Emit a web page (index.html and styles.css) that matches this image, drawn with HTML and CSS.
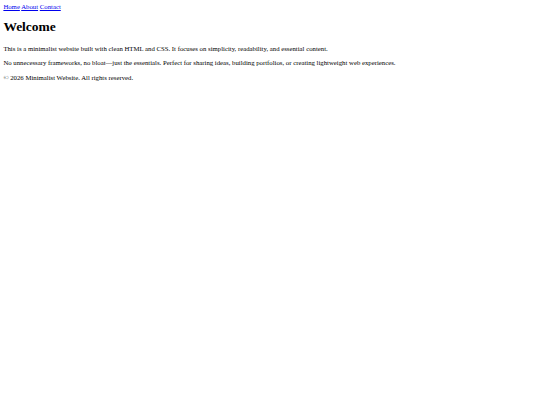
FILE: index.html
```html
<!DOCTYPE html>
<html>
<head>
<meta charset="utf-8">
<title>Minimalist Website</title>
<link rel="stylesheet" href="styles.css">
</head>
<body class="page">
<nav class="nav"><a href="#">Home</a> <a href="#">About</a> <a href="#">Contact</a></nav>
<main class="main">
<h1 class="title">Welcome</h1>
<p class="text">This is a minimalist website built with clean HTML and CSS. It focuses on simplicity, readability, and essential content.</p>
<p class="text">No unnecessary frameworks, no bloat—just the essentials. Perfect for sharing ideas, building portfolios, or creating lightweight web experiences.</p>
</main>
<footer class="footer"><p class="text footer-text">© 2026 Minimalist Website. All rights reserved.</p></footer>
</body>
</html>
```
FILE: styles.css
```css
.page {
  margin: 3.375px;
  font-family: "Liberation Serif", "Times New Roman", serif;
  font-size: 6.75px;
  color: #000;
  background: #fff;
}
.nav a { color: #00e; }
.title {
  font-size: 13.5px;
  margin: 9px 0 10px;
}
.text { margin: 6.75px 0; }
.footer-text { margin-top: 7.5px; }
```
